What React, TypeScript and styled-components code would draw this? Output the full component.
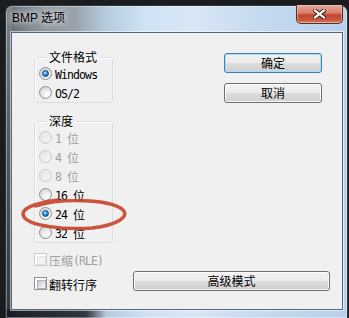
import styled, { createGlobalStyle, css } from 'styled-components';

const GlobalStyle = createGlobalStyle`
  html, body {
    margin: 0;
    padding: 0;
    background: #1b1c1e;
  }
  body {
    width: 349px;
    height: 318px;
    overflow: hidden;
    font-family: "Noto Sans CJK SC", "Liberation Sans", sans-serif;
  }
`;

const HAN = `"Noto Sans CJK SC", "Liberation Sans", sans-serif`;
const MONO = `"DejaVu Sans Mono", "Liberation Mono", monospace`;

const depths = [
  { bits: '1', disabled: true },
  { bits: '4', disabled: true },
  { bits: '8', disabled: true },
  { bits: '16', disabled: false },
  { bits: '24', disabled: false, checked: true },
  { bits: '32', disabled: false },
];

const Stage = styled.div`
  position: relative;
  width: 349px;
  height: 318px;
  padding: 5px 0 0 5px;
  box-sizing: border-box;
`;

const Win = styled.div`
  width: 343px;
  height: 313px;
  box-sizing: border-box;
  display: flex;
  flex-direction: column;
  border: 1px solid #30353b;
  border-bottom: none;
  border-radius: 7px 7px 0 0;
  box-shadow: inset 0 0 0 1px rgba(255, 255, 255, 0.35);
  background:
    linear-gradient(to right, rgba(22, 27, 33, 0.95) 0, rgba(30, 36, 43, 0.85) 80px, rgba(40, 50, 60, 0) 100px) bottom / 100% 9px no-repeat,
    linear-gradient(to bottom, #7b838b 0, #555d66 120px, #2f363d 100%) left / 6px 100% no-repeat,
    linear-gradient(to right, #5f676f 0, #8a9299 30px, #9aa3ab 70px, #b6cbdf 100px, #d0e2f4 140px, #d8e7f6 190px, #c6daf0 250px, #b8d0eb 343px);
`;

const TitleBar = styled.div`
  height: 26px;
  display: flex;
  align-items: flex-start;
  flex-shrink: 0;
`;

const Title = styled.div`
  margin: 4px 0 0 6px;
  font: 12px/16px "Liberation Sans", "Noto Sans CJK SC", sans-serif;
  color: #000;
  text-shadow: 0 0 6px rgba(255, 255, 255, 0.95), 0 0 10px rgba(255, 255, 255, 0.7);
`;

const CloseButton = styled.div`
  margin: -1px 4px 0 auto;
  width: 47px;
  height: 19px;
  box-sizing: border-box;
  display: flex;
  align-items: center;
  justify-content: center;
  border: 1px solid #5b2b24;
  border-top: none;
  border-radius: 0 0 5px 5px;
  background: linear-gradient(to bottom, #e6a99b 0%, #d67e6a 45%, #c4442e 55%, #c85a3f 85%, #d98a6e 100%);
  box-shadow: inset 0 0 0 1px rgba(255, 220, 210, 0.45);
`;

const Client = styled.div`
  margin: 0 4px 0 5px;
  height: 278px;
  box-sizing: border-box;
  border: 1px solid #56677a;
  box-shadow: 0 0 0 1px rgba(255, 255, 255, 0.55);
  background: #f0f0f0;
  padding: 17px 0 0 22px;
  display: flex;
  flex-direction: column;
`;

const TopArea = styled.div`
  display: flex;
  align-items: flex-start;
`;

const LeftCol = styled.div`
  width: 79px;
  display: flex;
  flex-direction: column;
  gap: 11px;
`;

const RightCol = styled.div`
  margin-left: 111px;
  padding-top: 3px;
  display: flex;
  flex-direction: column;
  gap: 10px;
`;

const Group = styled.fieldset`
  margin: 0;
  padding: 0 0 0 4px;
  min-width: 0;
  border: 1px solid #d5dfe5;
  border-radius: 3px;
  box-shadow: inset 1px 1px 0 #fff;
`;

const GroupTitle = styled.legend`
  margin-left: 7px;
  padding: 0 3px;
  font: 12px/14px ${HAN};
  color: #000;
`;

const OptionRow = styled.label<{ $disabled?: boolean }>`
  height: 19px;
  display: flex;
  align-items: center;
  gap: 3px;
  color: ${({ $disabled }) => ($disabled ? '#a0a0a0' : '#000')};
`;

const Radio = styled.span<{ $checked?: boolean; $disabled?: boolean }>`
  position: relative;
  width: 13px;
  height: 13px;
  box-sizing: border-box;
  flex-shrink: 0;
  border-radius: 50%;
  border: 1px solid ${({ $disabled }) => ($disabled ? '#c9cacb' : '#8f9091')};
  background: ${({ $disabled }) =>
    $disabled
      ? 'linear-gradient(135deg, #e4e4e4, #f6f6f6)'
      : 'radial-gradient(circle at 65% 70%, #ffffff 0%, #eeeeee 35%, #c9c9c9 100%)'};
  ${({ $checked }) =>
    $checked &&
    css`
      &::after {
        content: '';
        position: absolute;
        left: 2px;
        top: 2px;
        width: 7px;
        height: 7px;
        box-sizing: border-box;
        border-radius: 50%;
        border: 1px solid #0e3f73;
        background: radial-gradient(circle at 40% 35%, #b7ecff 0%, #2a98e0 45%, #0b4f93 100%);
      }
    `}
`;

const CheckBox = styled.span<{ $disabled?: boolean }>`
  position: relative;
  width: 13px;
  height: 13px;
  box-sizing: border-box;
  flex-shrink: 0;
  border: 1px solid ${({ $disabled }) => ($disabled ? '#c9cacb' : '#8f9091')};
  background: #fff;
  &::after {
    content: '';
    position: absolute;
    left: 2px;
    top: 2px;
    width: 7px;
    height: 7px;
    border: 1px solid ${({ $disabled }) => ($disabled ? '#e2e3e4' : '#b0b4b9')};
    background: ${({ $disabled }) =>
      $disabled ? '#f4f4f4' : 'linear-gradient(135deg, #c9cdd3 0%, #e3e5e8 60%, #f7f7f7 100%)'};
  }
`;

const LabelText = styled.span`
  white-space: nowrap;
  line-height: 19px;
`;

const Mono = styled.span`
  font: 11.5px ${MONO};
  letter-spacing: -0.9px;
  vertical-align: 1px;
`;

const Han = styled.span`
  font: 12px ${HAN};
`;

const PushButton = styled.button<{ $default?: boolean; $width: number }>`
  width: ${({ $width }) => $width}px;
  height: 20px;
  padding: 0;
  box-sizing: border-box;
  font: 12px/18px ${HAN};
  color: #000;
  border-radius: 3px;
  border: 1px solid ${({ $default }) => ($default ? '#3c7fb1' : '#707070')};
  background: linear-gradient(to bottom, #f2f2f2 0%, #ebebeb 48%, #dddddd 52%, #cfcfcf 100%);
  box-shadow: inset 0 0 0 1px ${({ $default }) => ($default ? '#a9def8' : 'rgba(255, 255, 255, 0.8)')};
`;

const CompressRow = styled.div`
  margin-top: 7px;
`;

const BottomRow = styled.div`
  margin-top: 1px;
  display: flex;
  align-items: flex-start;
`;

const FlipOption = styled(OptionRow)`
  width: 99px;
  margin-top: 4px;
  gap: 2px;
`;

const CheckOption = styled(OptionRow)`
  gap: 2px;
`;

const AdvancedButton = styled(PushButton)`
  margin-top: 1px;
`;

const Annotation = styled.svg`
  position: absolute;
  left: 0;
  top: 0;
  pointer-events: none;
`;

export default function App() {
  return (
    <>
      <GlobalStyle />
      <Stage>
        <Win>
          <TitleBar>
            <Title>BMP 选项</Title>
            <CloseButton>
              <svg width="13" height="10" viewBox="0 0 13 10">
                <path d="M2 1.5 L11 8.5 M11 1.5 L2 8.5" stroke="#3a2724" strokeWidth="4.2" strokeLinecap="square" />
                <path d="M2 1.5 L11 8.5 M11 1.5 L2 8.5" stroke="#ffffff" strokeWidth="2.2" strokeLinecap="square" />
              </svg>
            </CloseButton>
          </TitleBar>
          <Client>
            <TopArea>
              <LeftCol>
                <Group>
                  <GroupTitle>文件格式</GroupTitle>
                  <OptionRow>
                    <Radio $checked />
                    <LabelText>
                      <Mono>Windows</Mono>
                    </LabelText>
                  </OptionRow>
                  <OptionRow>
                    <Radio />
                    <LabelText>
                      <Mono>OS/2</Mono>
                    </LabelText>
                  </OptionRow>
                </Group>
                <Group>
                  <GroupTitle>深度</GroupTitle>
                  {depths.map((d) => (
                    <OptionRow key={d.bits} $disabled={d.disabled}>
                      <Radio $checked={d.checked} $disabled={d.disabled} />
                      <LabelText>
                        <Mono>{d.bits} </Mono>
                        <Han>位</Han>
                      </LabelText>
                    </OptionRow>
                  ))}
                </Group>
              </LeftCol>
              <RightCol>
                <PushButton $default $width={98}>确定</PushButton>
                <PushButton $width={98}>取消</PushButton>
              </RightCol>
            </TopArea>
            <CompressRow>
              <CheckOption $disabled>
                <CheckBox $disabled />
                <LabelText>
                  <Han>压缩</Han>
                  <Mono>(RLE)</Mono>
                </LabelText>
              </CheckOption>
            </CompressRow>
            <BottomRow>
              <FlipOption>
                <CheckBox />
                <LabelText>
                  <Han>翻转行序</Han>
                </LabelText>
              </FlipOption>
              <AdvancedButton $width={197}>高级模式</AdvancedButton>
            </BottomRow>
          </Client>
        </Win>
        <Annotation width="349" height="318" viewBox="0 0 349 318">
          <path
            d="M36 206 C 60 198, 108 199, 122 209 C 131 216, 118 225, 92 228 C 64 230, 30 226, 24 217 C 19 209, 34 203, 58 200"
            fill="none"
            stroke="#c9452e"
            strokeWidth="3.4"
            strokeLinecap="round"
            strokeLinejoin="round"
            opacity="0.92"
          />
        </Annotation>
      </Stage>
    </>
  );
}
